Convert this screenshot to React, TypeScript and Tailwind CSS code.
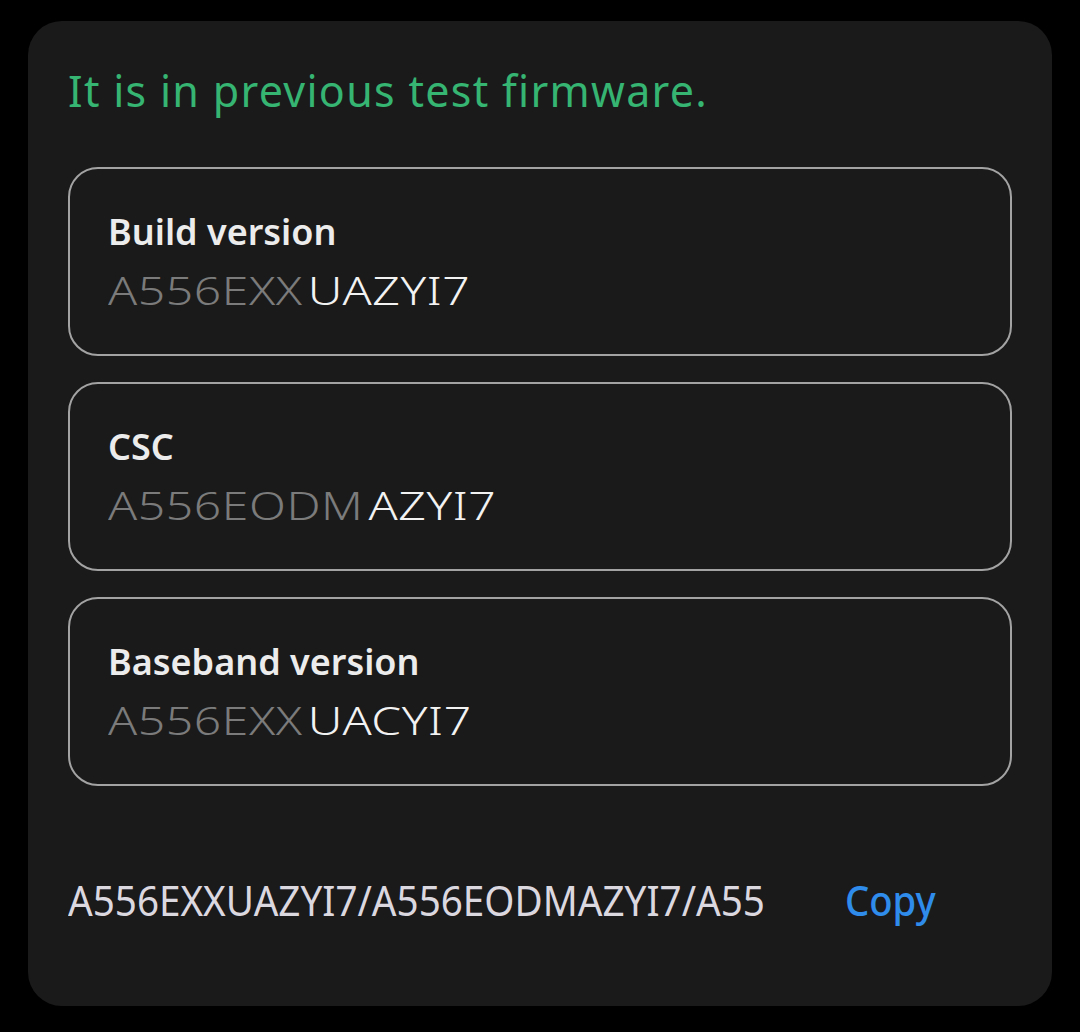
import React from "react";

const rows = [
  { title: "Build version", pre: "A556EXX", post: "UAZYI7" },
  { title: "CSC", pre: "A556EODM", post: "AZYI7" },
  { title: "Baseband version", pre: "A556EXX", post: "UACYI7" },
];

export default function App() {
  return (
    <div className="min-h-[1032px] w-[1080px] overflow-hidden bg-black pt-[21px] pl-[28px]" style={{ fontFamily: '"Noto Sans", "Open Sans", sans-serif' }}>
      <div className="w-[1024px] h-[985px] rounded-[34px] bg-[#1a1a1a] px-[40px] pt-[45px] flex flex-col">
        <p className="text-[43px] leading-[50px] text-[#36b472] tracking-[1.3px]">It is in previous test firmware.</p>
        <div className="mt-[51px] flex flex-col gap-[26px]">
          {rows.map((r) => (
            <div key={r.title} className="h-[189px] overflow-hidden rounded-[30px] border-2 border-[#a3a3a3] pl-[38px] pt-[41px]">
              <div className="text-[36px] leading-[44px] font-semibold text-[#ececec]">{r.title}</div>
              <div className="mt-[13px] w-fit text-[39px] leading-[46px] font-light flex origin-left scale-x-[1.23] tracking-[0.5px]">
                <span className="text-[#7b7b7b]">{r.pre}</span>
                <span className="ml-[4px] text-[#f2f2f2]">{r.post}</span>
              </div>
            </div>
          ))}
        </div>
        <div className="mt-[89px] flex items-center">
          <div className="w-[697px] overflow-hidden whitespace-nowrap text-[42px] leading-[50px] text-[#dcd8e0]">
            <span className="inline-block origin-left scale-x-[0.92]">A556EXXUAZYI7/A556EODMAZYI7/A556EXXUACYI7</span>
          </div>
          <div className="ml-[80px] text-[42px] leading-[50px] font-medium text-[#2f8ceb]">
            <span className="inline-block origin-left scale-x-[0.91]">Copy</span>
          </div>
        </div>
      </div>
    </div>
  );
}
